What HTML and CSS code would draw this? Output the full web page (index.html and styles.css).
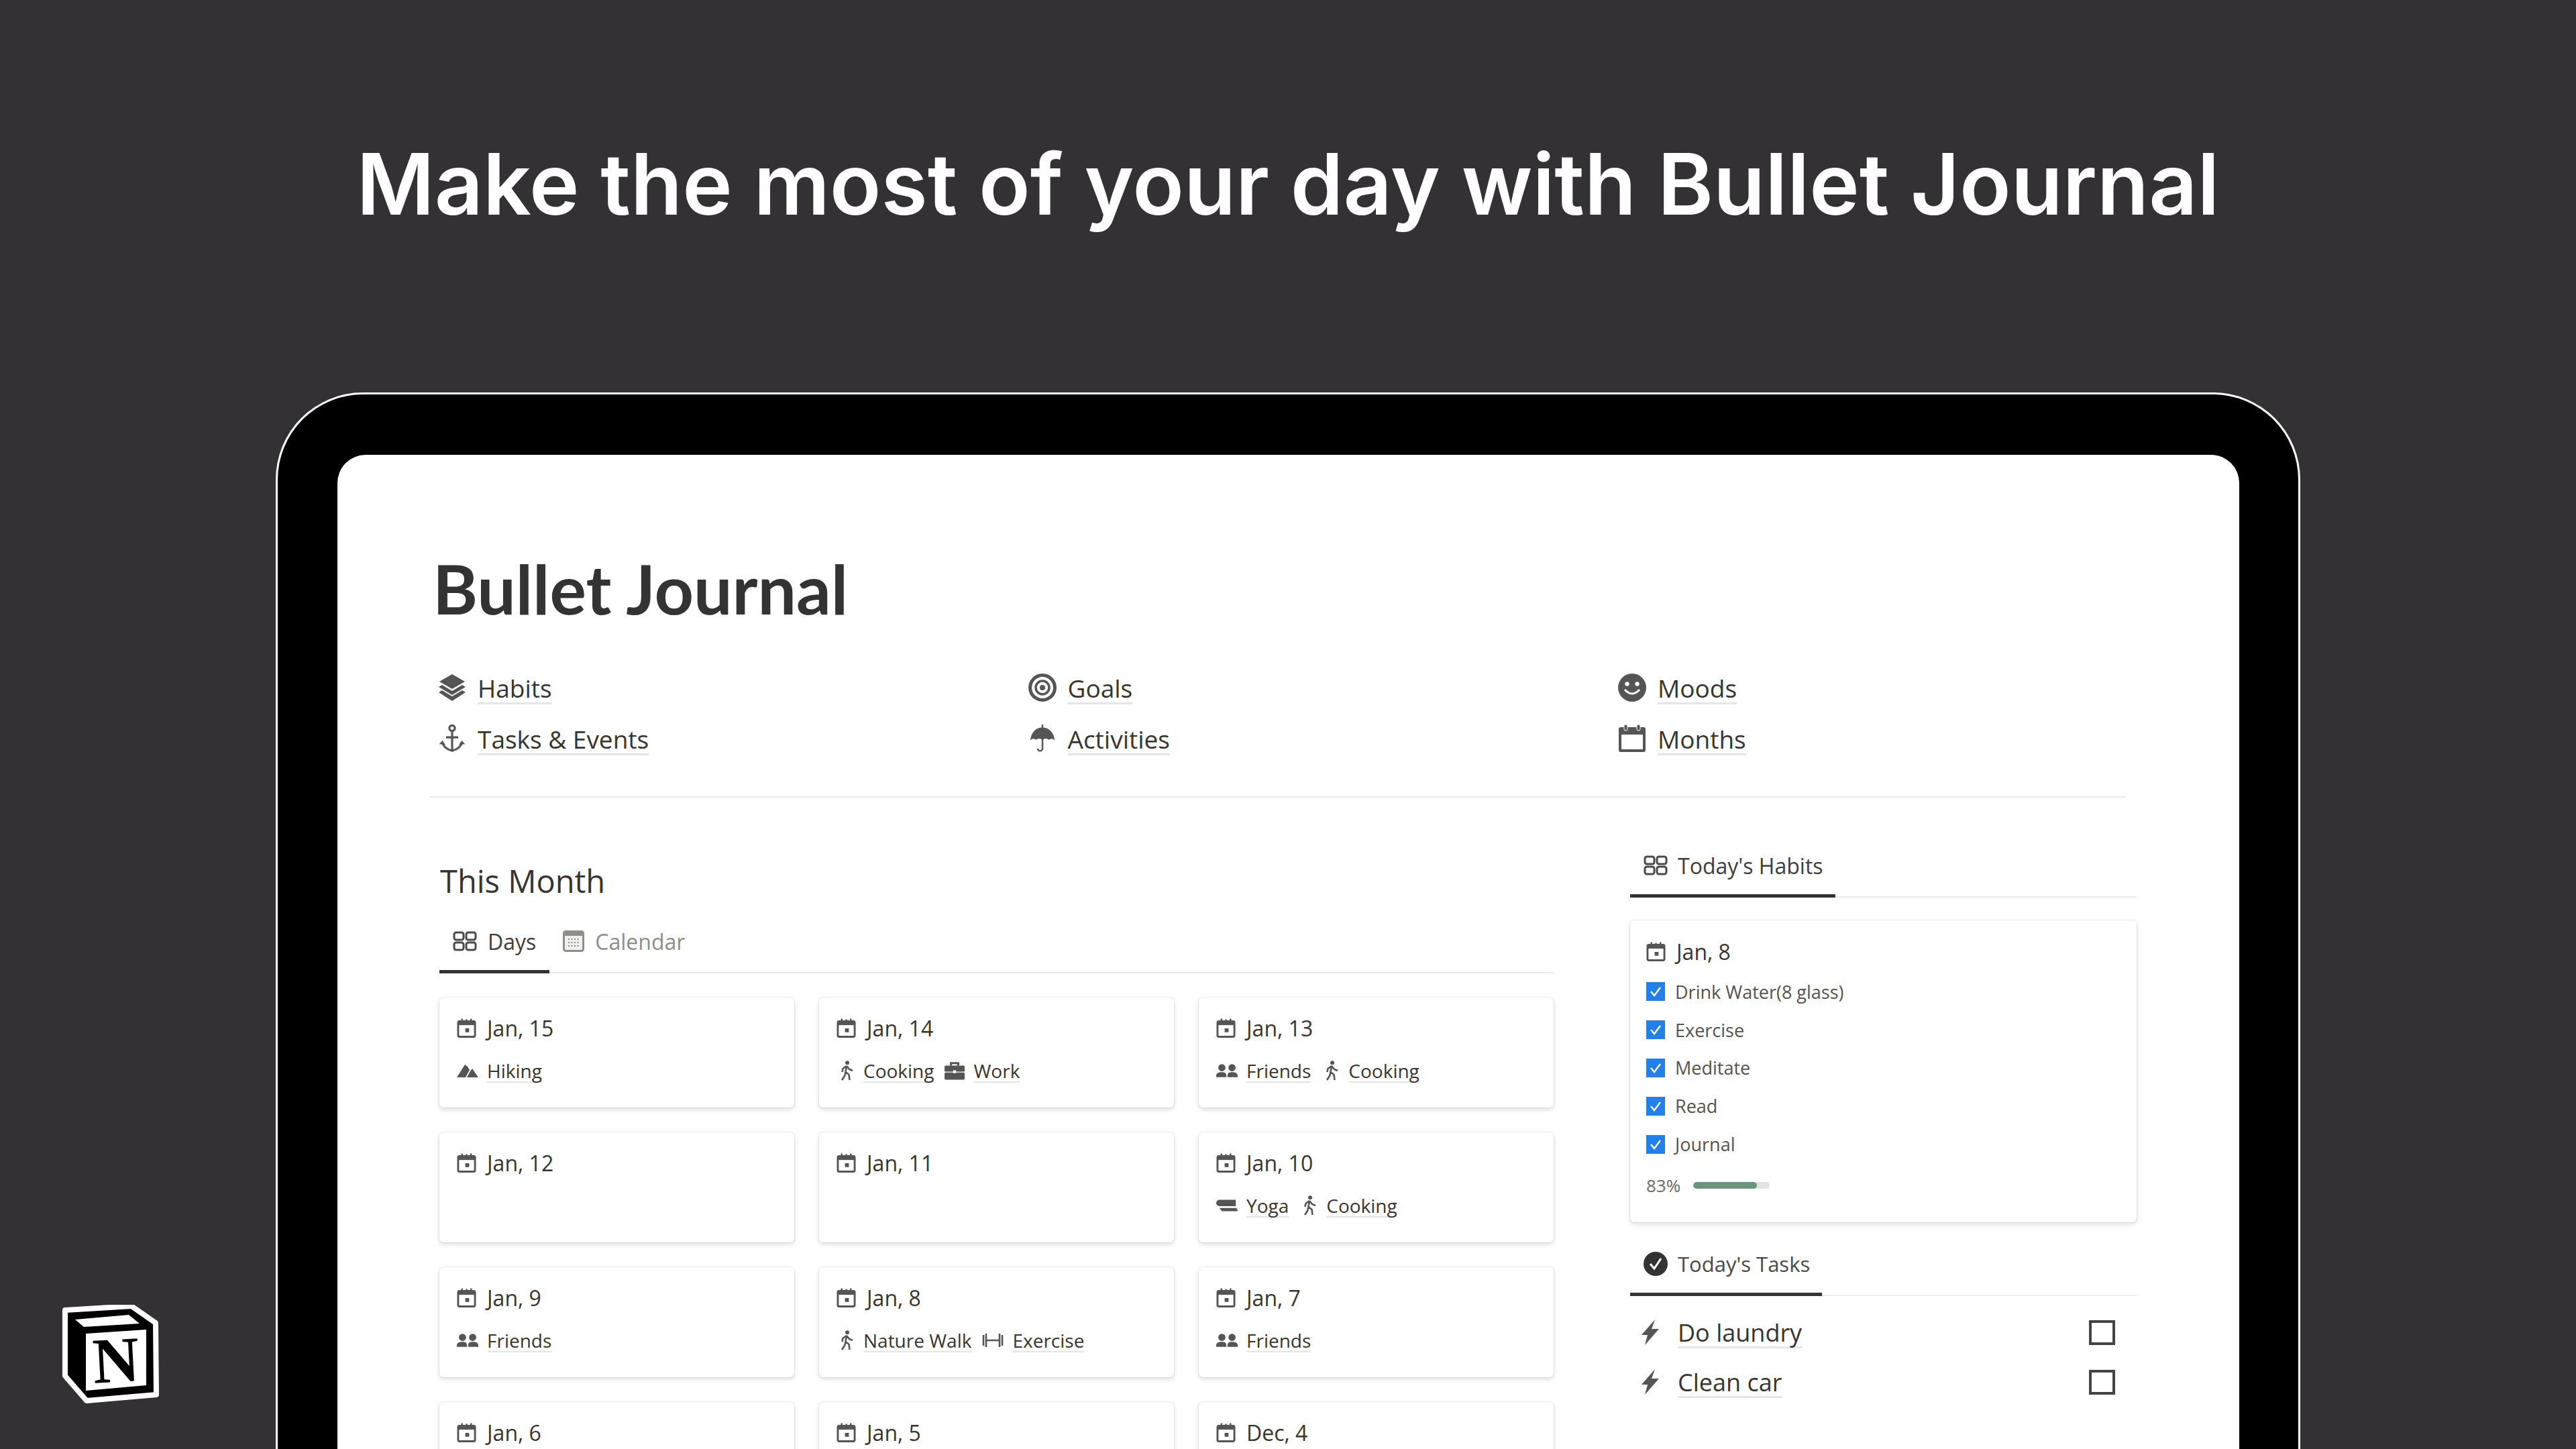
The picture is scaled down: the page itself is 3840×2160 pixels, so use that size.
FILE: index.html
```html
<!DOCTYPE html>
<html lang="en">
<head>
<meta charset="utf-8">
<title>Bullet Journal</title>
<link rel="stylesheet" href="styles.css">
</head>
<body>
<svg class="sprite" xmlns="http://www.w3.org/2000/svg">
  <symbol id="i-date" viewBox="0 0 30 30"><rect x="2" y="5" width="26" height="24" rx="2" fill="none" stroke="currentColor" stroke-width="3"/><rect x="2" y="5" width="26" height="6" fill="currentColor"/><path d="M8 1v5M15 2v4M22 1v5" stroke="currentColor" stroke-width="2.5" fill="none"/><rect x="13" y="16" width="6" height="6" fill="currentColor"/></symbol>
  <symbol id="i-layers" viewBox="0 0 42 42"><path d="M21 1 L40 12 L21 23 L2 12z" fill="currentColor"/><path d="M6 17 L21 26 L36 17 L41 20 L21 32 L1 20z" fill="currentColor"/><path d="M6 25 L21 34 L36 25 L41 28 L21 41 L1 28z" fill="currentColor"/></symbol>
  <symbol id="i-anchor" viewBox="0 0 42 46"><circle cx="21" cy="6" r="4.5" fill="none" stroke="currentColor" stroke-width="3.5"/><path d="M21 10v33M11 21h20" fill="none" stroke="currentColor" stroke-width="3.5"/><path d="M5 29 Q7 39 21 43 Q35 39 37 29" fill="none" stroke="currentColor" stroke-width="3.5"/><path d="M0 32 L5 26 L10 33z M32 33 L37 26 L42 32z" fill="currentColor"/></symbol>
  <symbol id="i-target" viewBox="0 0 42 42"><circle cx="21" cy="21" r="18.5" fill="none" stroke="currentColor" stroke-width="5"/><circle cx="21" cy="21" r="10" fill="none" stroke="currentColor" stroke-width="3.5"/><circle cx="21" cy="21" r="4" fill="currentColor"/></symbol>
  <symbol id="i-umbrella" viewBox="0 0 44 48"><path d="M22 5 C11 5 3 13 1 27 Q6 22 11 26 Q16 22 22 26 Q28 22 33 26 Q38 22 43 27 C41 13 33 5 22 5z" fill="currentColor"/><path d="M22 0v6M22 24v17a4 4 0 0 1-8 0" fill="none" stroke="currentColor" stroke-width="2.8"/></symbol>
  <symbol id="i-smile" viewBox="0 0 42 42"><circle cx="21" cy="21" r="21" fill="currentColor"/><circle cx="13.5" cy="15.5" r="3.2" fill="#fff"/><circle cx="28.5" cy="15.5" r="3.2" fill="#fff"/><path d="M10 24 Q21 36 32 24" fill="none" stroke="#fff" stroke-width="3"/></symbol>
  <symbol id="i-month" viewBox="0 0 42 42"><rect x="1" y="4" width="40" height="37" rx="3" fill="currentColor"/><rect x="5" y="15" width="32" height="22" rx="1" fill="#fff"/><rect x="9" y="0" width="5" height="9" rx="2" fill="currentColor" stroke="#fff" stroke-width="1"/><rect x="28" y="0" width="5" height="9" rx="2" fill="currentColor" stroke="#fff" stroke-width="1"/></symbol>
  <symbol id="i-gallery" viewBox="0 0 36 30"><g fill="none" stroke="currentColor" stroke-width="3"><rect x="2" y="2" width="14" height="11" rx="3"/><rect x="20" y="2" width="14" height="11" rx="3"/><rect x="2" y="17" width="14" height="11" rx="3"/><rect x="20" y="17" width="14" height="11" rx="3"/></g></symbol>
  <symbol id="i-cal" viewBox="0 0 32 32"><rect x="1.5" y="1.5" width="29" height="29" rx="3" fill="#f1f0ef" stroke="currentColor" stroke-width="3"/><rect x="2" y="2" width="28" height="6" fill="currentColor"/><path d="M8 13h16M8 18h16M8 23h16" stroke="currentColor" stroke-width="2" stroke-dasharray="2 2.5" fill="none"/></symbol>
  <symbol id="i-mountain" viewBox="0 0 32 20"><path d="M0 20 L12 1 L16 4 L19 9 L13 20z M15 20 L20.5 10 L23 7 L32 20z" fill="currentColor"/></symbol>
  <symbol id="i-walk" viewBox="0 0 24 30"><circle cx="13" cy="3.2" r="3" fill="currentColor"/><path d="M12 8 L10.5 17 L15.5 21 L16.5 29 M10.5 17 L9 23 L5 29 M12 8 L6.5 12 L5.5 17 M12 8 L16 13 L21 15" fill="none" stroke="currentColor" stroke-width="2.6" stroke-linejoin="round"/></symbol>
  <symbol id="i-case" viewBox="0 0 28 26"><path d="M9 6V2.5h10V6" fill="none" stroke="currentColor" stroke-width="3"/><rect x="0" y="6" width="28" height="8.5" rx="1.5" fill="currentColor"/><rect x="0" y="15.5" width="28" height="10" rx="1.5" fill="currentColor"/><rect x="12" y="12.5" width="4" height="4" fill="#fff"/></symbol>
  <symbol id="i-friends" viewBox="0 0 36 24"><circle cx="9.5" cy="7" r="6" fill="currentColor"/><circle cx="26.5" cy="7" r="6" fill="currentColor"/><path d="M0 23 V20 C0 16 5 14.5 9.5 14.5 S17 16 17 20 V23z M19 23 V20 C19 16 22 14.5 26.5 14.5 S36 16 36 20 V23z" fill="currentColor"/></symbol>
  <symbol id="i-mat" viewBox="0 0 34 22"><path d="M5 2h26v10H5a5 5 0 0 1 0-10z" fill="currentColor"/><path d="M5 15h27l2 4v1H9z" fill="currentColor"/></symbol>
  <symbol id="i-bell" viewBox="0 0 32 24"><path d="M2 4v16M6 2v20M26 2v20M30 4v16M6 12h20" fill="none" stroke="currentColor" stroke-width="2.6"/></symbol>
  <symbol id="i-done" viewBox="0 0 36 36"><circle cx="18" cy="18" r="18" fill="currentColor"/><path d="M10 18 L16 25 L26 10" fill="none" stroke="#fff" stroke-width="3"/></symbol>
  <symbol id="i-bolt" viewBox="0 0 26 38"><path d="M20 0 L0 23 H9 L5 38 L26 14 H15z" fill="currentColor"/></symbol>
  <symbol id="i-tick" viewBox="0 0 28 28"><path d="M7 14 L12 20 L21 8" fill="none" stroke="#fff" stroke-width="2.4"/></symbol>
</svg>

<main class="stage">
  <h2 class="headline">Make the most of your day with Bullet Journal</h2>

  <div class="device">
    <section class="screen">
      <h1 class="title">Bullet Journal</h1>

      <nav class="links">
        <a class="link"><svg class="link-icon"><use href="#i-layers"/></svg><span class="u">Habits</span></a>
        <a class="link"><svg class="link-icon"><use href="#i-target"/></svg><span class="u">Goals</span></a>
        <a class="link"><svg class="link-icon"><use href="#i-smile"/></svg><span class="u">Moods</span></a>
        <a class="link"><svg class="link-icon"><use href="#i-anchor"/></svg><span class="u">Tasks &amp; Events</span></a>
        <a class="link"><svg class="link-icon"><use href="#i-umbrella"/></svg><span class="u">Activities</span></a>
        <a class="link"><svg class="link-icon"><use href="#i-month"/></svg><span class="u">Months</span></a>
      </nav>

      <hr class="divider">

      <div class="columns">
        <div class="col-left">
          <h3 class="section-title">This Month</h3>
          <div class="tabs">
            <div class="tab active"><svg class="tab-icon"><use href="#i-gallery"/></svg>Days</div>
            <div class="tab muted"><svg class="tab-icon small"><use href="#i-cal"/></svg>Calendar</div>
          </div>

          <div class="cards">
            <article class="card">
              <div class="date"><svg class="date-icon"><use href="#i-date"/></svg>Jan, 15</div>
              <div class="tags"><svg class="tag-icon wide"><use href="#i-mountain"/></svg><span class="u">Hiking</span></div>
            </article>
            <article class="card">
              <div class="date"><svg class="date-icon"><use href="#i-date"/></svg>Jan, 14</div>
              <div class="tags"><svg class="tag-icon"><use href="#i-walk"/></svg><span class="u">Cooking</span><svg class="tag-icon case"><use href="#i-case"/></svg><span class="u">Work</span></div>
            </article>
            <article class="card">
              <div class="date"><svg class="date-icon"><use href="#i-date"/></svg>Jan, 13</div>
              <div class="tags"><svg class="tag-icon wide"><use href="#i-friends"/></svg><span class="u">Friends</span><svg class="tag-icon"><use href="#i-walk"/></svg><span class="u">Cooking</span></div>
            </article>
            <article class="card">
              <div class="date"><svg class="date-icon"><use href="#i-date"/></svg>Jan, 12</div>
            </article>
            <article class="card">
              <div class="date"><svg class="date-icon"><use href="#i-date"/></svg>Jan, 11</div>
            </article>
            <article class="card">
              <div class="date"><svg class="date-icon"><use href="#i-date"/></svg>Jan, 10</div>
              <div class="tags"><svg class="tag-icon wide"><use href="#i-mat"/></svg><span class="u">Yoga</span><svg class="tag-icon"><use href="#i-walk"/></svg><span class="u">Cooking</span></div>
            </article>
            <article class="card">
              <div class="date"><svg class="date-icon"><use href="#i-date"/></svg>Jan, 9</div>
              <div class="tags"><svg class="tag-icon wide"><use href="#i-friends"/></svg><span class="u">Friends</span></div>
            </article>
            <article class="card">
              <div class="date"><svg class="date-icon"><use href="#i-date"/></svg>Jan, 8</div>
              <div class="tags"><svg class="tag-icon"><use href="#i-walk"/></svg><span class="u">Nature Walk</span><svg class="tag-icon wide"><use href="#i-bell"/></svg><span class="u">Exercise</span></div>
            </article>
            <article class="card">
              <div class="date"><svg class="date-icon"><use href="#i-date"/></svg>Jan, 7</div>
              <div class="tags"><svg class="tag-icon wide"><use href="#i-friends"/></svg><span class="u">Friends</span></div>
            </article>
            <article class="card">
              <div class="date"><svg class="date-icon"><use href="#i-date"/></svg>Jan, 6</div>
            </article>
            <article class="card">
              <div class="date"><svg class="date-icon"><use href="#i-date"/></svg>Jan, 5</div>
            </article>
            <article class="card">
              <div class="date"><svg class="date-icon"><use href="#i-date"/></svg>Dec, 4</div>
            </article>
          </div>
        </div>

        <aside class="col-right">
          <div class="tabs">
            <div class="tab active side"><svg class="tab-icon"><use href="#i-gallery"/></svg>Today's Habits</div>
          </div>
          <article class="habit-card">
            <div class="date habit-date"><svg class="date-icon"><use href="#i-date"/></svg>Jan, 8</div>
            <div class="habit"><span class="check"><svg class="check-icon"><use href="#i-tick"/></svg></span>Drink Water(8 glass)</div>
            <div class="habit"><span class="check"><svg class="check-icon"><use href="#i-tick"/></svg></span>Exercise</div>
            <div class="habit"><span class="check"><svg class="check-icon"><use href="#i-tick"/></svg></span>Meditate</div>
            <div class="habit"><span class="check"><svg class="check-icon"><use href="#i-tick"/></svg></span>Read</div>
            <div class="habit"><span class="check"><svg class="check-icon"><use href="#i-tick"/></svg></span>Journal</div>
            <div class="progress"><span>83%</span><div class="track"><div class="fill" style="width:83%"></div></div></div>
          </article>

          <div class="tabs tasks-tabs">
            <div class="tab active side tasks"><svg class="tab-icon done"><use href="#i-done"/></svg>Today's Tasks</div>
          </div>
          <ul class="tasks-list">
            <li class="task"><svg class="bolt"><use href="#i-bolt"/></svg><span class="u">Do laundry</span><span class="box"></span></li>
            <li class="task"><svg class="bolt"><use href="#i-bolt"/></svg><span class="u">Clean car</span><span class="box"></span></li>
          </ul>
        </aside>
      </div>
    </section>
  </div>

  <svg class="notion" viewBox="33 35 144 147" xmlns="http://www.w3.org/2000/svg">
    <path d="M37 43 L136 37 L172 62 L173 169 L69 178 L37 141z" fill="#000" stroke="#fff" stroke-width="8" stroke-linejoin="round"/>
    <path d="M52 57 L132 50 L148 63 L65 68z" fill="#fff"/>
    <path d="M68 78 L158 72 L158 155 L68 163z" fill="#fff"/>
    <text class="notion-n" x="113" y="150" text-anchor="middle" transform="rotate(-3 113 118)">N</text>
  </svg>
</main>
</body>
</html>
```

FILE: styles.css
```css
* { box-sizing: border-box; }
html, body { margin: 0; padding: 0; }
body { width: 3840px; height: 2160px; overflow: hidden; background: #333133; font-family: "Open Sans", "Noto Sans", sans-serif; color: #37352f; }
.sprite { display: none; }

.stage { position: relative; width: 3840px; height: 2160px; overflow: hidden; display: flex; flex-direction: column; align-items: center; }
.headline { flex: none; margin: 189px 0 0; height: 170px; font-family: Inter, "Noto Sans", sans-serif; font-size: 126px; line-height: 170px; font-weight: 600; color: #fff; white-space: nowrap; }

.device { flex: 1; min-height: 0; width: 3018px; margin-top: 226px; padding: 90px 88px 0 89px; background: #000; border: 3px solid #fff; border-bottom: 0; border-radius: 130px 130px 0 0; display: flex; }
.screen { flex: 1; background: #fff; border-radius: 42px 42px 0 0; padding: 141px 0 0 142px; overflow: hidden; }

.title { margin: 0; font-family: Lato, "Open Sans", sans-serif; font-size: 102px; line-height: 116px; font-weight: 700; color: #333; }

.links { margin: 52px 0 0 8px; display: grid; grid-template-columns: repeat(3, 879.5px); grid-auto-rows: 76px; }
.link { display: flex; align-items: center; gap: 17px; font-size: 37px; font-weight: 500; }
.link-icon { width: 42px; height: 42px; color: #555; flex: none; }
.u { text-decoration: underline; text-decoration-color: #e6e5e3; text-decoration-thickness: 3px; text-underline-offset: 7px; text-decoration-skip-ink: none; white-space: nowrap; }

.divider { margin: 48px 0 0 -5px; width: 2530px; height: 2px; border: 0; background: #ebeaea; }

.columns { display: grid; grid-template-columns: 1661px 755px; column-gap: 114px; margin-left: 10px; padding-top: 60px; }

.col-left { padding-top: 34px; }
.section-title { margin: 0 0 19px; font-size: 47px; line-height: 60px; font-weight: 500; padding-left: 1px; }

.tabs { display: flex; border-bottom: 2px solid #ebeaea; height: 89px; }
.tab { height: 89px; padding: 0 20px 7px; display: flex; align-items: center; gap: 16px; font-size: 32px; white-space: nowrap; }
.tab.active { border-bottom: 5px solid #333; padding-bottom: 2px; color: #3f3e3a; }
.tab.muted { color: #8f8e8a; }
.tab-icon { width: 36px; height: 30px; color: #4a4a48; flex: none; }
.tab-icon.small { width: 32px; height: 32px; color: #8f8e8a; }
.tab-icon.done { width: 36px; height: 36px; color: #333; }
.side { gap: 15px; padding-right: 18px; }
.tab.tasks { color: #4a4a48; font-size: 31px; }

.cards { margin-top: 36px; display: grid; grid-template-columns: repeat(3, 529px); column-gap: 37px; row-gap: 37px; }
.card { height: 164px; padding: 23px 26px 0; background: #fff; border-radius: 6px; box-shadow: 0 0 0 1px rgba(15,15,15,.06), 0 3px 7px rgba(15,15,15,.14); }
.date { height: 44px; display: flex; align-items: center; gap: 16px; font-size: 32px; font-weight: 500; white-space: nowrap; }
.date-icon { width: 29px; height: 30px; color: #555; flex: none; }
.tags { height: 40px; margin-top: 22px; display: flex; align-items: center; gap: 13px; font-size: 28px; white-space: nowrap; }
.tags .u { margin-right: 3px; text-underline-offset: 5px; text-decoration-thickness: 2px; }
.tag-icon { width: 24px; height: 30px; color: #555; flex: none; margin-left: 3px; }
.tag-icon.wide { width: 32px; height: 24px; margin-left: 0; }
.tag-icon.case { width: 30px; height: 28px; margin-left: 0; }

.tasks-tabs { margin-top: 21px; }
.habit-card { margin-top: 34px; height: 450px; padding: 24px 24px 0; border-radius: 6px; background: #fff; box-shadow: 0 0 0 1px rgba(15,15,15,.06), 0 3px 7px rgba(15,15,15,.14); }
.habit-date { margin-bottom: 10px; }
.habit { height: 56.8px; display: flex; align-items: center; gap: 15px; font-size: 27px; color: #55534e; }
.check { width: 28px; height: 28px; background: #2280e8; display: flex; flex: none; }
.check-icon { width: 28px; height: 28px; }
.progress { margin-top: 13px; height: 40px; display: flex; align-items: center; gap: 19px; font-size: 26px; color: #6a6965; }
.track { width: 114px; height: 10px; border-radius: 5px; background: #e3e2e0; overflow: hidden; }
.fill { height: 100%; border-radius: 5px; background: #6a967e; }

.tasks-list { margin: 17px 0 0; padding: 0; list-style: none; }
.task { height: 74px; padding: 0 32px 0 17px; display: flex; align-items: center; gap: 28px; font-size: 36px; font-weight: 500; }
.bolt { width: 26px; height: 38px; color: #555; flex: none; }
.box { margin-left: auto; width: 39px; height: 37px; border: 4px solid #444; flex: none; }

.notion { position: absolute; left: 93px; top: 1945px; width: 144px; height: 147px; }
.notion-n { font-family: "Liberation Serif", serif; font-weight: 700; font-size: 96px; fill: #000; }
```
